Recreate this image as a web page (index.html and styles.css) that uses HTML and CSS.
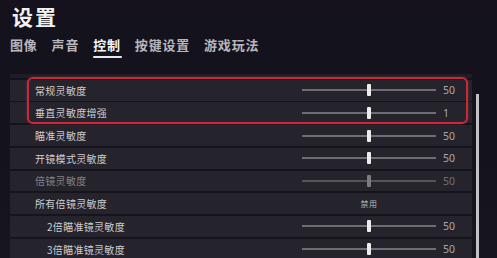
FILE: index.html
```
<!DOCTYPE html>
<html lang="zh">
<head>
<meta charset="utf-8">
<link rel="stylesheet" href="styles.css">
</head>
<body>
<div class="page">
  <h1 class="title">设置</h1>
  <nav class="tabs">
    <span class="tab">图像</span>
    <span class="tab">声音</span>
    <span class="tab active">控制</span>
    <span class="tab">按键设置</span>
    <span class="tab">游戏玩法</span>
  </nav>
  <div class="panel">
    <div class="list">
      <div class="strip"></div>
      <div class="row"><span class="label">常规灵敏度</span><div class="slider"><div class="track"></div><div class="thumb" style="left:65px"></div></div><span class="value">50</span></div>
      <div class="row"><span class="label">垂直灵敏度增强</span><div class="slider"><div class="track"></div><div class="thumb" style="left:65px"></div></div><span class="value">1</span></div>
      <div class="row"><span class="label">瞄准灵敏度</span><div class="slider"><div class="track"></div><div class="thumb" style="left:65px"></div></div><span class="value">50</span></div>
      <div class="row"><span class="label">开镜模式灵敏度</span><div class="slider"><div class="track"></div><div class="thumb" style="left:65px"></div></div><span class="value">50</span></div>
      <div class="row dim"><span class="label">倍镜灵敏度</span><div class="slider"><div class="track"></div><div class="thumb" style="left:65px"></div></div><span class="value">50</span></div>
      <div class="row"><span class="label">所有倍镜灵敏度</span><div class="slider"><span class="off">禁用</span></div><span class="value"></span></div>
      <div class="row sub"><span class="label">2倍瞄准镜灵敏度</span><div class="slider"><div class="track"></div><div class="thumb" style="left:65px"></div></div><span class="value">50</span></div>
      <div class="row sub"><span class="label">3倍瞄准镜灵敏度</span><div class="slider"><div class="track"></div><div class="thumb" style="left:65px"></div></div><span class="value">50</span></div>
    </div>
    <div class="highlight"></div>
    <div class="scrollbar"></div>
  </div>
</div>
</body>
</html>
```
FILE: styles.css
```
html, body {
  margin: 0;
  padding: 0;
  background: #14121b;
  overflow: hidden;
}
body {
  font-family: "Noto Sans CJK SC", "Noto Sans", sans-serif;
  color: #ddd;
  width: 497px;
  height: 258px;
}
.page {
  position: relative;
  width: 497px;
  height: 258px;
  background: linear-gradient(180deg, #15121d 0%, #14121b 60%, #17151d 100%);
}
.title {
  margin: 0;
  padding: 3px 0 0 12px;
  font-size: 21px;
  line-height: 26px;
  font-weight: 700;
  color: #f2f2f2;
  letter-spacing: 2px;
}
.tabs {
  display: flex;
  gap: 14px;
  padding: 7px 0 0 10px;
  height: 22px;
}
.tab {
  font-size: 13px;
  line-height: 18px;
  font-weight: 700;
  color: #b8b7bd;
  letter-spacing: 0.8px;
  position: relative;
}
.tab.active {
  color: #f4f4f4;
}
.tab.active::after {
  content: "";
  position: absolute;
  left: 0;
  right: -1px;
  top: 20px;
  height: 2px;
  background: #e8e8e8;
  border-radius: 1px;
}
.panel {
  position: relative;
  margin-top: 16px;
  height: 183px;
}
.list {
  margin-left: 10px;
  width: 462px;
  display: flex;
  flex-direction: column;
  gap: 1.8px;
}
.strip {
  height: 4px;
  background: #1f1d25;
}
.row {
  height: 20.9px;
  display: flex;
  align-items: center;
  background: #25232b;
}
.label {
  flex: 1;
  padding-left: 25px;
  font-size: 10px;
  letter-spacing: 0.3px;
  color: #d0cfd4;
}
.row.sub .label {
  padding-left: 37px;
}
.row.dim .label {
  color: #85848a;
}
.slider {
  position: relative;
  width: 134px;
  height: 14px;
  display: flex;
  align-items: center;
  justify-content: center;
}
.track {
  width: 100%;
  height: 2px;
  background: #6e6d74;
}
.thumb {
  position: absolute;
  top: 1px;
  width: 4px;
  height: 12px;
  background: #ececec;
  border-radius: 1px;
}
.row.dim .thumb {
  background: #7c7b80;
}
.row.dim .track {
  background: #55545a;
}
.off {
  font-size: 8px;
  color: #bdbcc2;
  letter-spacing: 0.5px;
}
.value {
  width: 36px;
  padding-left: 7px;
  box-sizing: border-box;
  font-family: "Noto Sans", sans-serif;
  font-size: 10.5px;
  color: #a9a8ae;
}
.row.dim .value {
  color: #717076;
}
.highlight {
  position: absolute;
  left: 27px;
  top: 3px;
  width: 437px;
  height: 43px;
  border: 2px solid #c62a3b;
  border-radius: 6px;
  box-shadow: 0 0 3px rgba(200, 40, 60, 0.5);
}
.scrollbar {
  position: absolute;
  left: 476px;
  top: 20px;
  width: 2.5px;
  height: 170px;
  background: #c2c1c6;
}
```
